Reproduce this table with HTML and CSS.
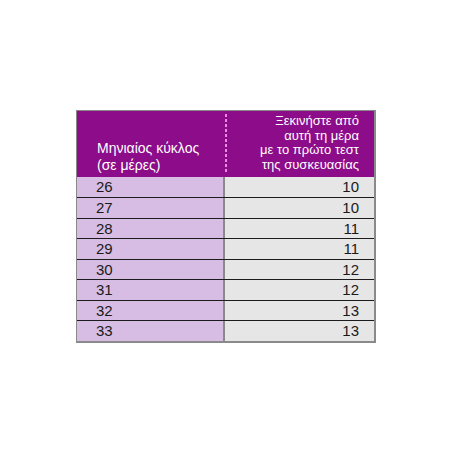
FILE: index.html
```html
<!DOCTYPE html>
<html lang="el">
<head>
<meta charset="utf-8">
<link rel="stylesheet" href="styles.css">
</head>
<body>
<div class="page">
  <div class="tbl">
    <div class="hdr">
      <div class="hcell hleft">Μηνιαίος κύκλος<br>(σε μέρες)</div>
      <div class="hdiv"></div>
      <div class="hcell hright">Ξεκινήστε από<br>αυτή τη μέρα<br>με το πρώτο τεστ<br>της συσκευασίας</div>
    </div>
    <div class="row"><div class="c1">26</div><div class="c2">10</div></div>
    <div class="row"><div class="c1">27</div><div class="c2">10</div></div>
    <div class="row"><div class="c1">28</div><div class="c2">11</div></div>
    <div class="row"><div class="c1">29</div><div class="c2">11</div></div>
    <div class="row"><div class="c1">30</div><div class="c2">12</div></div>
    <div class="row"><div class="c1">31</div><div class="c2">12</div></div>
    <div class="row"><div class="c1">32</div><div class="c2">13</div></div>
    <div class="row"><div class="c1">33</div><div class="c2">13</div></div>
  </div>
</div>
</body>
</html>
```
FILE: styles.css
```css
html, body {
  margin: 0;
  padding: 0;
  background: #ffffff;
}
.page {
  width: 452px;
  height: 452px;
  display: flex;
  align-items: center;
  justify-content: center;
  font-family: "Liberation Sans", Arial, sans-serif;
}
.tbl {
  width: 300px;
  box-sizing: border-box;
  border: 1px solid #8a8a8a;
  border-right-width: 2px;
  border-bottom-width: 2px;
  background: #e6e6e6;
}
.hdr {
  display: grid;
  grid-template-columns: 148px 2px 1fr;
  height: 66px;
  background: #8c0c8a;
  color: #ffffff;
}
.hcell {
  display: flex;
  box-sizing: border-box;
}
.hleft {
  align-items: flex-end;
  padding: 0 0 3px 20px;
  font-size: 14px;
  line-height: 17px;
}
.hright {
  align-items: center;
  justify-content: flex-end;
  text-align: right;
  padding: 0 15px 1px 0;
  font-size: 13px;
  line-height: 14.5px;
}
.hdiv {
  margin: 3px 0 4px;
  background: repeating-linear-gradient(to bottom, #e98ade 0 3px, transparent 3px 5px);
}
.row {
  display: grid;
  grid-template-columns: 148px 1fr;
  height: 20px;
  box-sizing: border-box;
  border-top: 1px solid #1c1c1c;
  font-size: 15px;
  color: #1a1a1a;
}
.row:nth-child(odd) {
  height: 21px;
}
.hdr + .row {
  border-top: none;
}
.c1 {
  background: #d7bde3;
  border-right: 2px solid #8a8a8a;
  padding-left: 19px;
  line-height: 19px;
}
.c2 {
  background: #e6e6e6;
  text-align: right;
  padding-right: 15px;
  line-height: 19px;
}
```
